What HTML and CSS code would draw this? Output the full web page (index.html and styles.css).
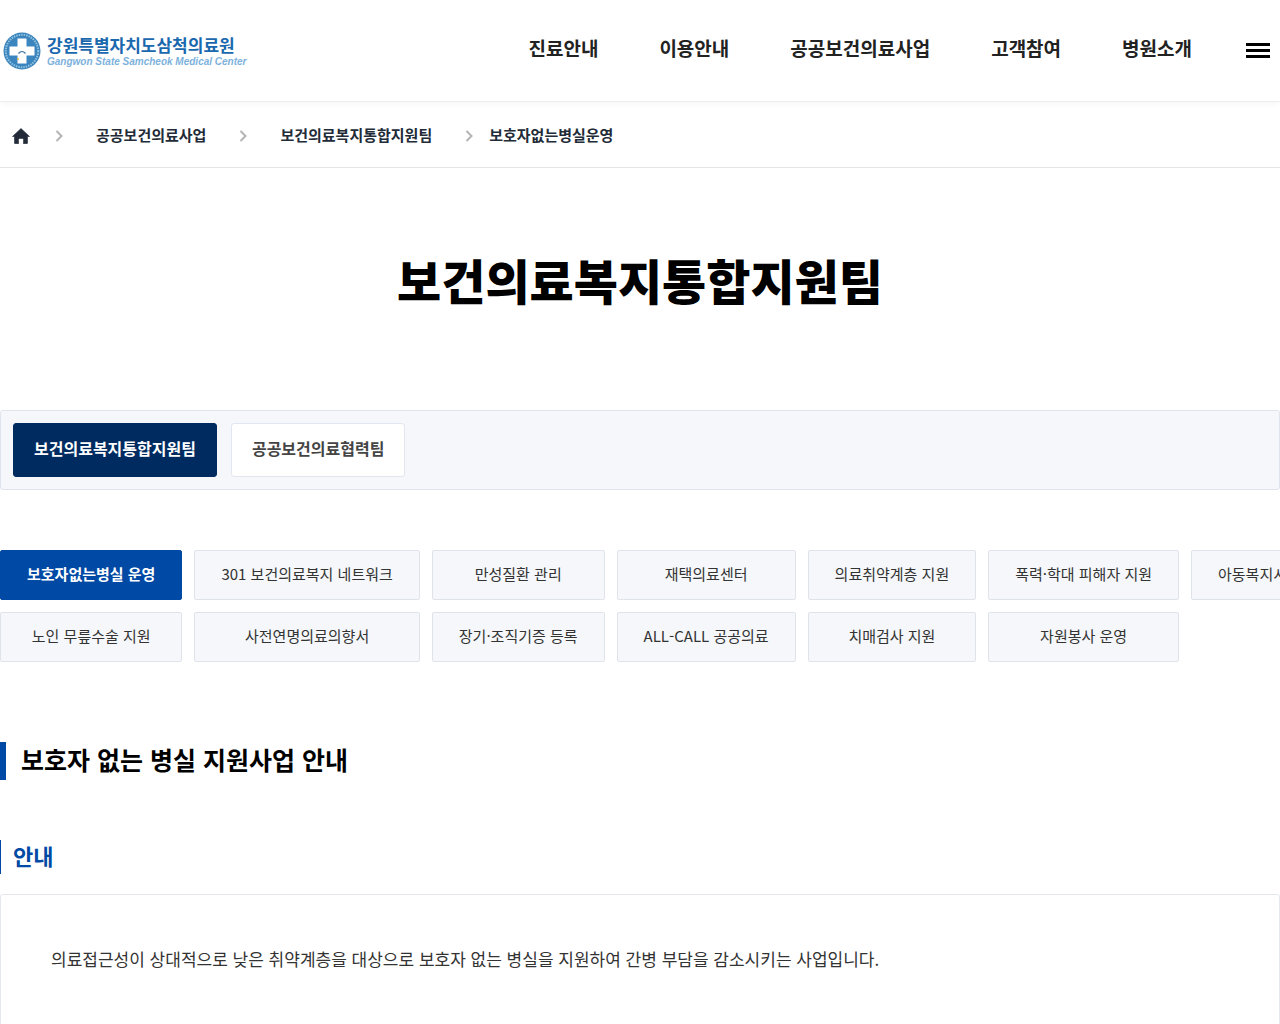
FILE: index.html
```html
<!DOCTYPE html>
<html lang="ko">
<head>
  <meta charset="UTF-8">
  <meta name="viewport" content="width=device-width, initial-scale=1">
  <title>보건의료복지통합지원팀 - 강원특별자치도삼척의료원</title>
  <link rel="stylesheet" href="styles.css">
</head>
<body>

  <header class="header">
    <a href="#" class="logo">
      <svg class="logo-mark" viewBox="0 0 38 38" aria-hidden="true">
        <circle cx="19" cy="19" r="18.5" fill="#3a83bb"/>
        <circle cx="19" cy="19" r="16.2" fill="none" stroke="#8fc3e2" stroke-width="2" stroke-dasharray="1.5 1"/>
        <circle cx="19" cy="19" r="14" fill="#3c86c0"/>
        <path d="M14.500 6.500h9v8h8v9h-8v8h-9v-8h-8v-9h8z" fill="#fff"/>
        <path d="M15.500 21.500q3.500-4 7 0" fill="none" stroke="#3a6f9c" stroke-width="1.200"/>
        <circle cx="15" cy="27" r="1" fill="#e2b84c"/>
      </svg>
      <span class="logo-text">
        <strong>강원특별자치도삼척의료원</strong>
        <em>Gangwon State Samcheok Medical Center</em>
      </span>
    </a>
    <nav class="gnb">
      <a href="#">진료안내</a>
      <a href="#">이용안내</a>
      <a href="#">공공보건의료사업</a>
      <a href="#">고객참여</a>
      <a href="#">병원소개</a>
    </nav>
    <button type="button" class="menu-btn" aria-label="전체메뉴"><span></span><span></span><span></span></button>
  </header>

  <nav class="breadcrumb" aria-label="현재 위치">
    <a href="#" class="home" aria-label="홈">
      <svg viewBox="0 0 18 16" aria-hidden="true"><path d="M9 .5L17.500 8.500H15.500V15q0 .8-.8.800H11.500V11.500q0-1-1-1h-3q-1 0-1 1v4.300H3.300Q2.500 15.800 2.500 15V8.500H.5z" fill="#222b37" stroke="#222b37" stroke-width=".6" stroke-linejoin="round"/></svg>
    </a>
    <svg class="arrow" viewBox="0 0 8 12" aria-hidden="true"><path d="M1.500 1l5 5-5 5"/></svg>
    <a href="#" class="depth">공공보건의료사업</a>
    <svg class="arrow" viewBox="0 0 8 12" aria-hidden="true"><path d="M1.500 1l5 5-5 5"/></svg>
    <a href="#" class="depth">보건의료복지통합지원팀</a>
    <svg class="arrow" viewBox="0 0 8 12" aria-hidden="true"><path d="M1.500 1l5 5-5 5"/></svg>
    <a href="#" class="current">보호자없는병실운영</a>
  </nav>

  <main>
    <h1>보건의료복지통합지원팀</h1>

    <div class="team-tab">
      <a href="#" class="on">보건의료복지통합지원팀</a>
      <a href="#">공공보건의료협력팀</a>
    </div>

    <div class="sub-tab">
      <a href="#" class="on">보호자없는병실 운영</a>
      <a href="#">301 보건의료복지 네트워크</a>
      <a href="#">만성질환 관리</a>
      <a href="#">재택의료센터</a>
      <a href="#">의료취약계층 지원</a>
      <a href="#">폭력·학대 피해자 지원</a>
      <a href="#">아동복지시설 지원</a>
      <a href="#">노인 무릎수술 지원</a>
      <a href="#">사전연명의료의향서</a>
      <a href="#">장기·조직기증 등록</a>
      <a href="#">ALL-CALL 공공의료</a>
      <a href="#">치매검사 지원</a>
      <a href="#">자원봉사 운영</a>
    </div>

    <h2>보호자 없는 병실 지원사업 안내</h2>
    <h3>안내</h3>
    <div class="box">
      <p>의료접근성이 상대적으로 낮은 취약계층을 대상으로 보호자 없는 병실을 지원하여 간병 부담을 감소시키는 사업입니다.</p>
    </div>
  </main>

</body>
</html>
```
FILE: styles.css
```css
* {
  box-sizing: border-box;
}
body {
  margin: 0;
  font-family: "Noto Sans CJK KR", sans-serif;
  color: #222;
  background: #fff;
}
a {
  color: inherit;
  text-decoration: none;
}
h1, h2, h3, p {
  margin: 0;
}

/* header */
.header {
  display: flex;
  align-items: center;
  height: 102px;
  padding: 0 10px 0 3px;
  border-bottom: 1px solid #eee;
  box-shadow: 0 2px 6px rgba(0, 0, 0, 0.04);
}
.logo {
  display: flex;
  align-items: center;
  gap: 6px;
}
.logo-mark {
  width: 38px;
  height: 38px;
}
.logo-text strong {
  display: block;
  font-size: 17px;
  line-height: 22px;
  color: #1a68ae;
}
.logo-text em {
  display: block;
  font: italic bold 10px/12px "Liberation Sans", sans-serif;
  color: #7db2dc;
}
.gnb {
  display: flex;
  gap: 61px;
  margin-left: auto;
  padding-bottom: 6px;
  font-size: 19px;
  font-weight: 700;
  line-height: 28px;
}
.menu-btn {
  display: flex;
  flex-direction: column;
  gap: 3px;
  width: 24px;
  margin-left: 54px;
  padding: 0;
  border: 0;
  background: none;
  cursor: pointer;
}
.menu-btn span {
  height: 3px;
  background: #000;
}

/* breadcrumb */
.breadcrumb {
  display: flex;
  align-items: center;
  height: 66px;
  padding: 2px 12px 0;
  border-bottom: 1px solid #e5e5e5;
  font-size: 15px;
  font-weight: 700;
  line-height: 22px;
  color: #222b37;
}
.home svg {
  display: block;
  width: 18px;
  height: 16px;
}
.arrow {
  width: 8px;
  height: 12px;
  fill: none;
  stroke: #b4b4b4;
  stroke-width: 2;
}
.home {
  margin-right: 25px;
}
.depth,
.current {
  padding-bottom: 2px;
}
.depth {
  margin: 0 33px;
}
.current {
  margin-left: 16px;
}

/* content */
h1 {
  padding: 76px 0 96px;
  font-size: 48px;
  font-weight: 900;
  line-height: 70px;
  text-align: center;
  color: #000;
}
.team-tab {
  display: flex;
  gap: 14px;
  padding: 12px;
  border: 1px solid #dfe4ec;
  border-radius: 3px;
  background: #f5f7fb;
}
.team-tab a {
  padding: 0 20px 4px;
  border: 1px solid #e2e6ee;
  border-radius: 3px;
  background: #fff;
  font-size: 16px;
  font-weight: 700;
  line-height: 48px;
  color: #444;
}
.team-tab .on {
  border-color: #002b61;
  background: #002b61;
  color: #fff;
}
.sub-tab {
  display: grid;
  grid-template-columns: repeat(7, max-content);
  gap: 12px;
  margin: 60px 0 80px;
  overflow: hidden;
}
.sub-tab a {
  padding: 0 26px 2px;
  border: 1px solid #dfe3ea;
  border-radius: 2px;
  background: #f5f7fa;
  font-size: 15px;
  line-height: 46px;
  text-align: center;
  color: #333;
}
.sub-tab .on {
  border-color: #0049a4;
  background: #0049a4;
  font-weight: 700;
  color: #fff;
}
h2 {
  padding: 0 0 4px 15px;
  border-left: 6px solid #0049a4;
  font-size: 25px;
  font-weight: 700;
  line-height: 34px;
  color: #000;
}
h3 {
  margin: 60px 0 20px;
  padding: 0 0 4px 12px;
  border-left: 1px solid #0049a4;
  font-size: 22px;
  line-height: 30px;
  color: #0049a4;
}
.box {
  padding: 50px 50px 60px;
  border: 1px solid #e4e7ee;
  border-radius: 3px;
}
.box p {
  font-size: 17px;
  line-height: 28px;
  color: #333;
}
```
